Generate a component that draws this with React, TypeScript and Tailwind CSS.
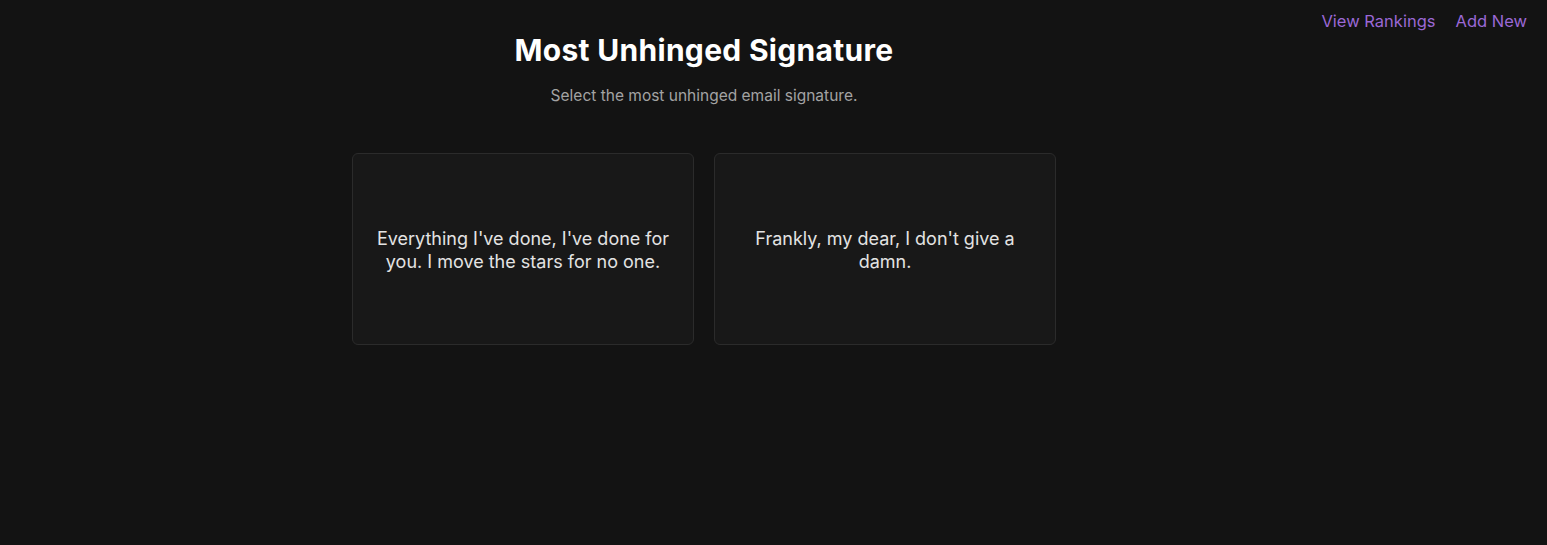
export default function App() {
  const signatures = [
    "Everything I've done, I've done for you. I move the stars for no one.",
    "Frankly, my dear, I don't give a damn.",
  ];

  return (
    <div
      className="relative min-h-screen bg-[#131313] text-white"
      style={{ fontFamily: "Inter, 'Noto Sans', sans-serif" }}
    >
      <nav className="absolute right-5 top-[9px] flex gap-5 text-[16.5px] text-[#9b68d6]">
        <a href="#" className="hover:underline">View Rankings</a>
        <a href="#" className="hover:underline">Add New</a>
      </nav>

      <main className="flex w-[1408px] flex-col items-center pt-8">
        <h1 className="text-3xl font-bold leading-9 tracking-[0.01em]">Most Unhinged Signature</h1>
        <p className="mt-4 text-[15.5px] leading-6 text-[#a3a3a3]">Select the most unhinged email signature.</p>

        <div className="mt-[45px] flex gap-5">
          {signatures.map((s) => (
            <button
              key={s}
              className="flex h-[192px] w-[342px] items-center justify-center rounded-md border border-[#2b2b2b] bg-[#181818] px-5 pb-6 pt-[26px] text-center text-lg leading-[23px] text-[#e3e3e3] hover:border-[#444]"
            >
              {s}
            </button>
          ))}
        </div>
      </main>
    </div>
  );
}
